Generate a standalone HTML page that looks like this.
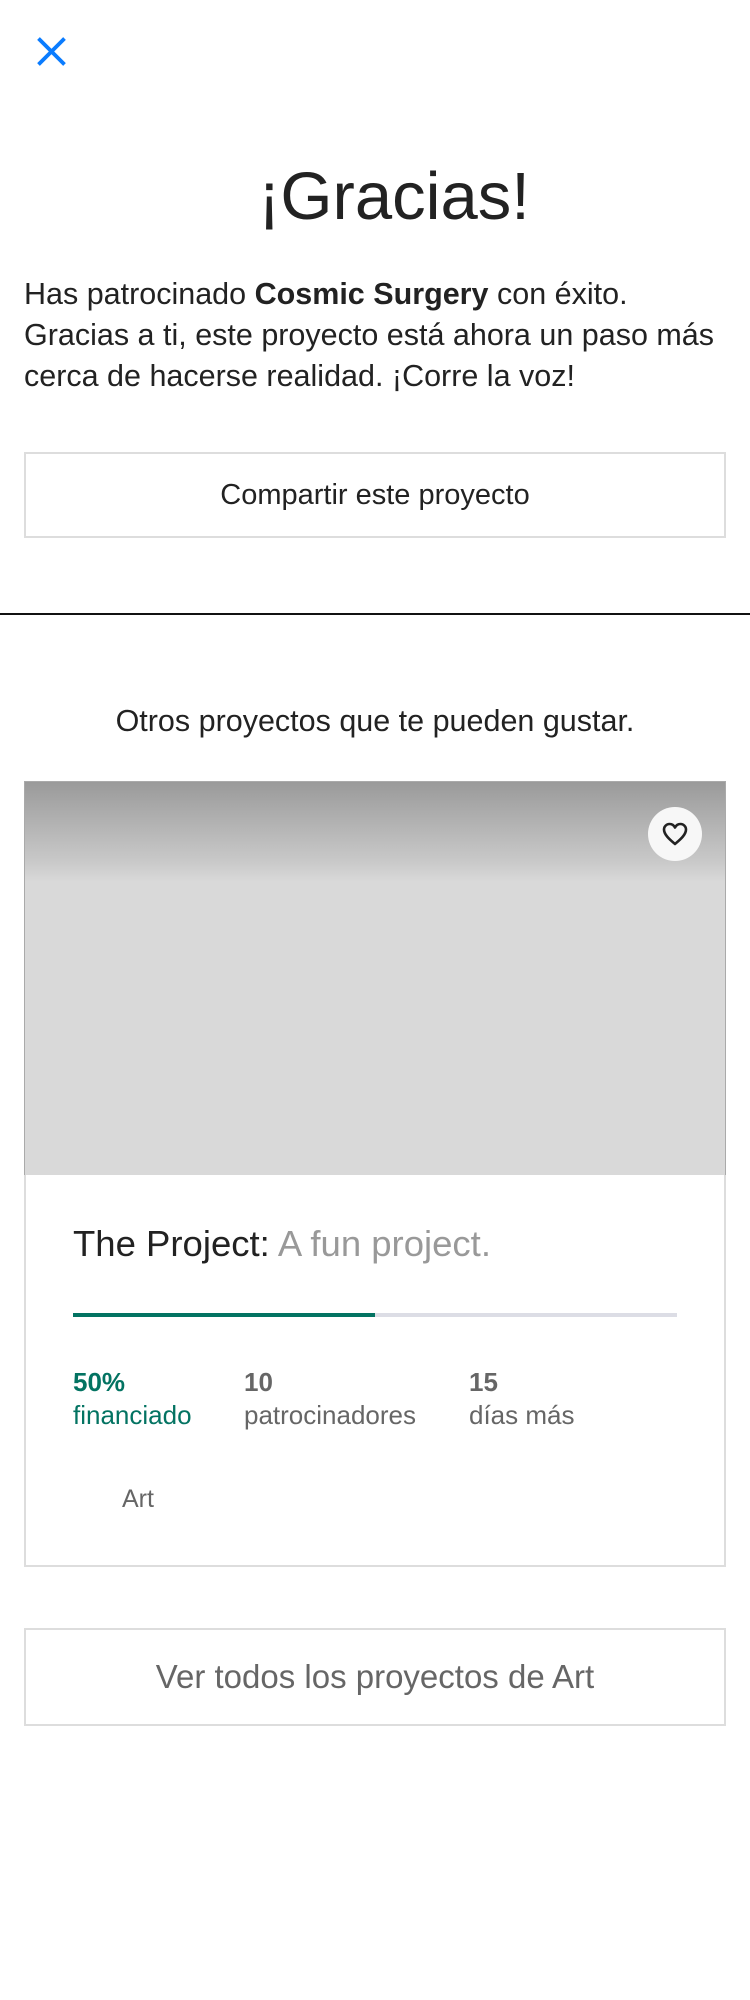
<!DOCTYPE html>
<html><head><meta charset="utf-8">
<style>
*{margin:0;padding:0;box-sizing:border-box}
body{width:750px;height:2000px;background:#fff;font-family:"Liberation Sans",sans-serif;color:#222;position:relative;overflow:hidden}
.abs{position:absolute}
</style></head><body>
<svg class="abs" style="left:36px;top:36px" width="31" height="31" viewBox="0 0 31 31"><path d="M2.5 2.5L28.5 28.5M28.5 2.5L2.5 28.5" stroke="#0a7cff" stroke-width="3.8" stroke-linecap="butt"/></svg>
<div class="abs" style="left:19px;width:750px;top:152px;text-align:center;font-size:67px;line-height:90px;color:#222">¡Gracias!</div>
<div class="abs" style="left:24px;width:726px;top:274px;font-size:30.5px;line-height:41px;color:#222;white-space:nowrap">Has patrocinado <b>Cosmic Surgery</b> con éxito.<br>Gracias a ti, este proyecto está ahora un paso más<br>cerca de hacerse realidad. ¡Corre la voz!</div>
<div class="abs" style="left:24px;top:452px;width:702px;height:86px;border:2px solid #ddd;text-align:center;line-height:82px;font-size:29px;color:#222">Compartir este proyecto</div>
<div class="abs" style="left:0;top:613px;width:750px;height:2px;background:#111"></div>
<div class="abs" style="left:0;width:750px;top:702px;text-align:center;font-size:30.5px;line-height:38px;color:#222">Otros proyectos que te pueden gustar.</div>
<div class="abs" style="left:24px;top:781px;width:702px;height:786px;border:2px solid #ddd"></div>
<div class="abs" style="left:24px;top:781px;width:702px;height:394px;background:linear-gradient(#9a9a9a 0px,#c9c9c9 80px,#d9d9d9 100px,#d9d9d9 394px);border:1px solid #aaa;border-bottom:none"></div>
<div class="abs" style="left:648px;top:807px;width:54px;height:54px;border-radius:50%;background:#f7f7f7"></div>
<svg class="abs" style="left:661px;top:821px" width="28" height="26" viewBox="0 0 28 26"><path d="M14 23C12 21 3 15 3 8.5 3 5.5 5.5 3 8.5 3 11 3 13 4.5 14 6.5 15 4.5 17 3 19.5 3 22.5 3 25 5.5 25 8.5 25 15 16 21 14 23Z" fill="none" stroke="#222" stroke-width="2.6" stroke-linejoin="round"/></svg>
<div class="abs" style="left:73px;top:1222px;font-size:36.5px;line-height:44px;color:#222">The Project: <span style="color:#999">A fun project.</span></div>
<div class="abs" style="left:73px;top:1313px;width:604px;height:4px;background:#dcdde5"></div>
<div class="abs" style="left:73px;top:1313px;width:302px;height:4px;background:#037362"></div>
<div class="abs" style="left:73px;top:1366px;font-size:26px;line-height:33px;color:#037362"><b>50%</b><br>financiado</div>
<div class="abs" style="left:244px;top:1366px;font-size:26px;line-height:33px;color:#666"><b>10</b><br>patrocinadores</div>
<div class="abs" style="left:469px;top:1366px;font-size:26px;line-height:33px;color:#666"><b>15</b><br>días más</div>
<div class="abs" style="left:122px;top:1484px;font-size:25px;line-height:30px;color:#666">Art</div>
<div class="abs" style="left:24px;top:1628px;width:702px;height:98px;border:2px solid #ddd;text-align:center;line-height:94px;font-size:33px;color:#666">Ver todos los proyectos de Art</div>
</body></html>
